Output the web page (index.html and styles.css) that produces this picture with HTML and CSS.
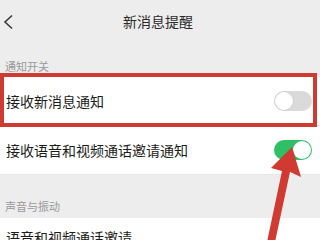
FILE: index.html
```html
<!DOCTYPE html>
<html lang="zh">
<head>
<meta charset="utf-8">
<link rel="stylesheet" href="styles.css">
</head>
<body>
<div class="page">
  <header class="bar">
    <svg class="back" width="14" height="16" viewBox="0 0 14 16"><polyline points="10,1.5 3,8 10,14.5" fill="none" stroke="#3a3a3a" stroke-width="1.6"/></svg>
    <div class="title">新消息提醒</div>
  </header>
  <div class="label first">通知开关</div>
  <div class="row">
    <span>接收新消息通知</span>
    <span class="toggle off"><i></i></span>
  </div>
  <div class="row">
    <span>接收语音和视频通话邀请通知</span>
    <span class="toggle on"><i></i></span>
  </div>
  <div class="label second">声音与振动</div>
  <div class="row last">
    <span>语音和视频通话邀请</span>
  </div>
  <div class="redbox"></div>
  <svg class="arrow" width="320" height="240" viewBox="0 0 320 240">
    <polygon points="292,147 301,177 290,172 275,242 267,242 282,171 271,168" fill="#d03a31"/>
  </svg>
</div>
</body>
</html>
```
FILE: styles.css
```css
html, body { margin: 0; padding: 0; }
body {
  background: #ededed;
  font-family: "Noto Sans CJK SC", "Noto Sans", sans-serif;
  color: #1c1c1c;
  width: 320px;
  height: 240px;
  overflow: hidden;
}
.page { position: relative; width: 320px; height: 240px; overflow: hidden; }
.bar {
  height: 44px;
  display: flex;
  align-items: center;
  justify-content: center;
  position: relative;
}
.back { position: absolute; left: 2px; top: 14px; }
.title { font-size: 14px; color: #2a2a2a; margin-top: -3px; margin-right: 4px; }
.label {
  font-size: 11px;
  color: #9a9a9a;
  padding-left: 5px;
  display: flex;
  align-items: flex-end;
  line-height: 16px;
  box-sizing: border-box;
}
.label.first { height: 33px; padding-bottom: 3px; }
.label.second { height: 43px; padding-bottom: 4px; }
.row {
  background: #fff;
  height: 48px;
  display: flex;
  align-items: center;
  justify-content: space-between;
  padding: 0 8px 0 6px;
  font-size: 14px;
  border-bottom: 1px solid #e6e6e6;
}
.row.last { height: 38px; border-bottom: none; }
.toggle {
  width: 38px;
  height: 20px;
  border-radius: 10px;
  position: relative;
  box-sizing: border-box;
}
.toggle i {
  position: absolute;
  top: 1px;
  width: 18px;
  height: 18px;
  border-radius: 50%;
  background: #fff;
}
.toggle.off { background: #dadada; }
.toggle.off i { left: 1px; box-shadow: 0 0 2px rgba(0,0,0,0.15); }
.toggle.on { background: #2fbf66; }
.toggle.on i { right: 1px; }
.redbox {
  position: absolute;
  left: 0;
  top: 73px;
  width: 317px;
  height: 54px;
  border: 4px solid #cf3b33;
  box-sizing: border-box;
}
.arrow { position: absolute; left: 0; top: 0; }
```
